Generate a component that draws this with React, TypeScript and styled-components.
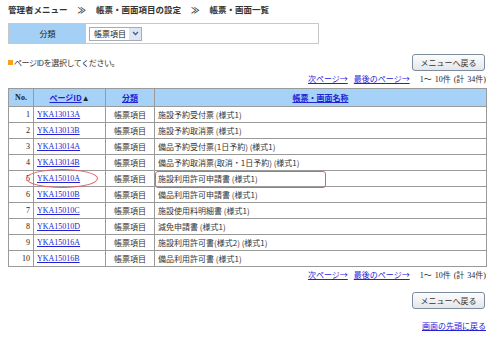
import styled, { createGlobalStyle } from 'styled-components';
import React from 'react';

const GlobalStyle = createGlobalStyle`
  body {
    margin: 0;
    background: #ffffff;
    font-family: "Liberation Serif", "Noto Sans CJK JP", serif;
    font-size: 8px;
    color: #222222;
  }
`;

const Page = styled.div`
  width: 479px;
  padding: 3px 13px 0 8px;
`;

const Breadcrumb = styled.div`
  font-family: "Noto Sans CJK JP", sans-serif;
  font-weight: bold;
  font-size: 8.5px;
  line-height: 12px;
  color: #333333;

  span {
    margin: 0 10px;
  }
`;

const FilterBox = styled.div`
  margin-top: 8px;
  width: 311px;
  height: 21px;
  display: flex;
  border: 1px solid #c8c8c8;
  box-sizing: border-box;
`;

const FilterLabel = styled.div`
  width: 77px;
  background: #a4d0f6;
  display: flex;
  align-items: center;
  justify-content: center;
  font-family: "Noto Sans CJK JP", sans-serif;
  font-size: 8px;
`;

const FilterValue = styled.div`
  flex: 1;
  display: flex;
  align-items: center;
  padding-left: 3px;
`;

const FakeSelect = styled.div`
  width: 53px;
  height: 14px;
  box-sizing: border-box;
  border: 1px solid #a5acb5;
  display: flex;
  align-items: center;
  justify-content: space-between;
  padding-left: 4px;
  font-family: "Noto Sans CJK JP", sans-serif;
  font-size: 8px;
  background: #ffffff;
`;

const Arrow = styled.div`
  width: 12px;
  height: 12px;
  background: #dde6f5;
  display: flex;
  align-items: center;
  justify-content: center;
`;

const ActionRow = styled.div`
  margin-top: 10px;
  display: flex;
  align-items: center;
  justify-content: space-between;
`;

const Notice = styled.div`
  font-family: "Noto Sans CJK JP", sans-serif;
  font-size: 8px;
  letter-spacing: -0.4px;
  color: #333333;
  display: flex;
  align-items: center;

  &::before {
    content: '';
    width: 5px;
    height: 5px;
    background: #f7a21c;
    margin-right: 1px;
  }
`;

const Button = styled.button<{ $top?: number }>`
  width: 73px;
  height: 17px;
  padding: 0;
  margin-top: ${(p) => p.$top || 0}px;
  margin-right: 2px;
  border: 1px solid #7c8c9e;
  border-radius: 3px;
  background: linear-gradient(#fdfdfd, #e4e6ea);
  font-family: "Noto Sans CJK JP", sans-serif;
  font-size: 8px;
  color: #333333;
`;

const Pager = styled.div`
  margin-top: 2px;
  height: 12px;
  line-height: 12px;
  display: flex;
  justify-content: flex-end;
  align-items: center;
  gap: 6px;
  font-size: 8px;
  padding-right: 1px;
`;

const Link = styled.a`
  color: #2323d6;
  text-decoration: underline;
  font-family: "Noto Sans CJK JP", sans-serif;
  font-size: 8px;
  cursor: pointer;
`;

const Count = styled.span`
  margin-left: 4px;
  word-spacing: 1px;
`;

const Table = styled.table`
  margin-top: 3px;
  width: 479px;
  border-collapse: collapse;
  table-layout: fixed;
  border: 1px solid #9a9a9a;
`;

const Th = styled.th<{ $w?: number }>`
  width: ${(p) => (p.$w ? `${p.$w}px` : 'auto')};
  height: 17px;
  padding: 0;
  background: #a6d2f7;
  border: 1px solid #9a9a9a;
  font-size: 8px;
  font-weight: bold;
  text-align: center;

  a {
    font-weight: bold;
  }
`;

const Td = styled.td<{ $align?: string }>`
  height: 15px;
  padding: 0 3px;
  border: 1px solid #9a9a9a;
  text-align: ${(p) => p.$align || 'left'};
  font-size: 8px;
  white-space: nowrap;
  overflow: visible;
  position: relative;
`;

const IdLink = styled.a`
  color: #2323d6;
  text-decoration: underline;
  font-family: "Liberation Serif", serif;
  font-size: 8px;
`;

const JpText = styled.span`
  font-family: "Noto Sans CJK JP", sans-serif;
  font-size: 8px;
  color: #333333;
`;

const Ellipse = styled.div`
  position: absolute;
  left: -8px;
  top: -2px;
  width: 70px;
  height: 17px;
  border: 1px solid #e0606a;
  border-radius: 50%;
  pointer-events: none;
`;

const Mark = styled.div`
  position: absolute;
  left: 0;
  top: 0;
  width: 169px;
  height: 15px;
  border: 1px solid #e0606a;
  border-radius: 3px;
  pointer-events: none;
`;

const Footer = styled.div`
  display: flex;
  flex-direction: column;
  align-items: flex-end;
`;

const TopLink = styled(Link)`
  margin-top: 11px;
  margin-right: 1px;
  line-height: 12px;
`;

const rows = [
  ['YKA13013A', '施設予約受付票 (様式1)'],
  ['YKA13013B', '施設予約取消票 (様式1)'],
  ['YKA13014A', '備品予約受付票(1日予約) (様式1)'],
  ['YKA13014B', '備品予約取消票(取消・1日予約) (様式1)'],
  ['YKA15010A', '施設利用許可申請書 (様式1)'],
  ['YKA15010B', '備品利用許可申請書 (様式1)'],
  ['YKA15010C', '施設使用料明細書 (様式1)'],
  ['YKA15010D', '減免申請書 (様式1)'],
  ['YKA15016A', '施設利用許可書(様式2) (様式1)'],
  ['YKA15016B', '備品利用許可書 (様式1)'],
];

const PagerLinks: React.FC = () => (
  <Pager>
    <Link>次ページ→</Link>
    <Link>最後のページ→</Link>
    <Count>
      1～ 10<JpText>件</JpText> (<JpText>計</JpText> 34<JpText>件</JpText>)
    </Count>
  </Pager>
);

const App: React.FC = () => {
  return (
    <Page>
      <GlobalStyle />
      <Breadcrumb>
        管理者メニュー<span>≫</span>帳票・画面項目の設定<span>≫</span>帳票・画面一覧
      </Breadcrumb>

      <FilterBox>
        <FilterLabel>分類</FilterLabel>
        <FilterValue>
          <FakeSelect>
            帳票項目
            <Arrow>
              <svg width="7" height="5" viewBox="0 0 7 5">
                <path d="M1 1 L3.5 3.5 L6 1" stroke="#4a5a80" strokeWidth="1.3" fill="none" />
              </svg>
            </Arrow>
          </FakeSelect>
        </FilterValue>
      </FilterBox>

      <ActionRow>
        <Notice>ページIDを選択してください。</Notice>
        <Button>メニューへ戻る</Button>
      </ActionRow>

      <PagerLinks />

      <Table>
        <thead>
          <tr>
            <Th $w={24}>No.</Th>
            <Th $w={71}>
              <Link>ページID</Link>▲
            </Th>
            <Th $w={48}>
              <Link>分類</Link>
            </Th>
            <Th>
              <Link>帳票・画面名称</Link>
            </Th>
          </tr>
        </thead>
        <tbody>
          {rows.map(([id, name], i) => (
            <tr key={id}>
              <Td $align="right">{i + 1}</Td>
              <Td>
                {i === 4 && <Ellipse />}
                <IdLink>{id}</IdLink>
              </Td>
              <Td $align="center">
                <JpText>帳票項目</JpText>
              </Td>
              <Td>
                {i === 4 && <Mark />}
                <JpText>{name}</JpText>
              </Td>
            </tr>
          ))}
        </tbody>
      </Table>

      <PagerLinks />

      <Footer>
        <Button $top={11}>メニューへ戻る</Button>
        <TopLink>画面の先頭に戻る</TopLink>
      </Footer>
    </Page>
  );
};

export default App;
